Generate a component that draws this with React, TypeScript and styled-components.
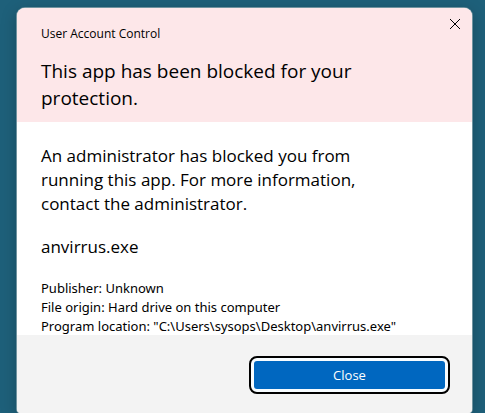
import React from 'react';
import styled, { createGlobalStyle } from 'styled-components';

const Global = createGlobalStyle`
  * { box-sizing: border-box; }
  html, body, #root { height: 100%; margin: 0; }
  body { overflow: hidden; font-family: "Open Sans", "Noto Sans", sans-serif; color: #000; }
`;

const Desktop = styled.main`
  display: flex;
  min-height: 100%;
  padding: 8px 13px 0 17px;
  background: #1e607a;
`;

const Dialog = styled.section`
  flex: 1;
  display: flex;
  flex-direction: column;
  overflow: hidden;
  border-radius: 8px 8px 4px 4px;
  background: #fff;
  box-shadow: 0 0 0 1px #6f939f, 0 4px 16px rgba(0, 0, 0, 0.25);
`;

const Header = styled.header`
  display: flex;
  justify-content: space-between;
  align-items: flex-start;
  padding: 0 0 10px 24px;
  background: #fde7e9;
`;

const Caption = styled.p`
  margin: 18px 0 16px;
  font-size: 12px;
  line-height: 16px;
`;

const Title = styled.h1`
  max-width: 340px;
  margin: 0;
  font-size: 19px;
  line-height: 27px;
  font-weight: 400;
`;

const CloseIcon = styled.button`
  display: grid;
  place-items: center;
  width: 34px;
  height: 32px;
  padding: 0;
  border: 0;
  background: transparent;
`;

const Content = styled.div`
  padding: 22px 24px 0;
`;

const Message = styled.p`
  max-width: 330px;
  margin: 0 0 20px;
  font-size: 17px;
  line-height: 24px;
`;

const FileName = styled.p`
  margin: 0 0 22px;
  font-size: 17px;
  line-height: 21px;
`;

const Details = styled.div`
  display: grid;
  gap: 1px;
  font-family: "Noto Sans", "Open Sans", sans-serif;
  font-size: 13px;
  line-height: 18px;
  white-space: nowrap;
`;

const Footer = styled.footer`
  flex: 1;
  display: flex;
  justify-content: flex-end;
  align-items: flex-start;
  padding: 26px 27px 0;
  background: #f3f3f3;
`;

const Action = styled.button`
  width: 191px;
  height: 28px;
  padding: 0;
  border: 0;
  border-radius: 3px;
  background: #0067c0;
  color: #fff;
  font: inherit;
  font-size: 13px;
  box-shadow: 0 0 0 3px #f7fcff;
  outline: 2px solid #000;
  outline-offset: 3px;
`;

export default function App() {
  return (
    <>
      <Global />
      <Desktop>
        <Dialog role="alertdialog" aria-labelledby="title">
          <Header>
            <div>
              <Caption>User Account Control</Caption>
              <Title id="title">This app has been blocked for your protection.</Title>
            </div>
            <CloseIcon aria-label="Close dialog">
              <svg width="10" height="10" viewBox="0 0 10 10" fill="none" stroke="#000">
                <path d="M0 0 10 10M10 0 0 10" />
              </svg>
            </CloseIcon>
          </Header>
          <Content>
            <Message>
              An administrator has blocked you from running this app. For more information, contact the
              administrator.
            </Message>
            <FileName>anvirrus.exe</FileName>
            <Details>
              <span>Publisher: Unknown</span>
              <span>File origin: Hard drive on this computer</span>
              <span>Program location: "C:\Users\sysops\Desktop\anvirrus.exe"</span>
            </Details>
          </Content>
          <Footer>
            <Action>Close</Action>
          </Footer>
        </Dialog>
      </Desktop>
    </>
  );
}
